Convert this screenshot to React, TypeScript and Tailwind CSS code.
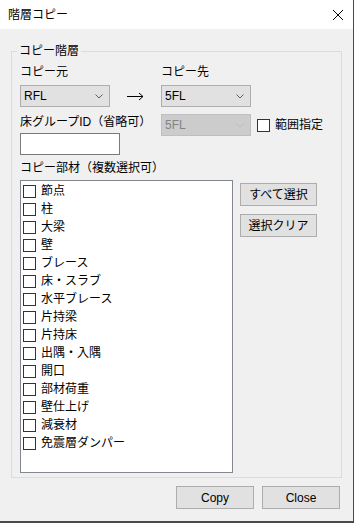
import React from "react";

const parts = [
  "節点",
  "柱",
  "大梁",
  "壁",
  "ブレース",
  "床・スラブ",
  "水平ブレース",
  "片持梁",
  "片持床",
  "出隅・入隅",
  "開口",
  "部材荷重",
  "壁仕上げ",
  "減衰材",
  "免震層ダンパー",
];

function Chevron({ color }: { color: string }) {
  return (
    <svg width="8" height="5" viewBox="0 0 8 5" className="shrink-0">
      <polyline points="0.5,0.5 4,4 7.5,0.5" fill="none" stroke={color} strokeWidth="1" />
    </svg>
  );
}

function Select({ value, disabled }: { value: string; disabled?: boolean }) {
  return (
    <div
      className={`flex h-[22px] w-[90px] items-center justify-between border pl-[3px] pr-[6px] ${
        disabled ? "border-[#bfbfbf] bg-[#cccccc] text-[#838383]" : "border-[#adadad] bg-[#e1e1e1] text-black"
      }`}
    >
      <span>{value}</span>
      <Chevron color={disabled ? "#bdbdbd" : "#606060"} />
    </div>
  );
}

function Box() {
  return <span className="block h-[13px] w-[13px] shrink-0 border border-[#333333] bg-white" />;
}

function Button({ label, w }: { label: string; w: string }) {
  return (
    <button className={`flex h-[23px] ${w} items-center justify-center border border-[#adadad] bg-[#e1e1e1] text-black`}>
      {label}
    </button>
  );
}

export default function App() {
  return (
    <div
      className="h-[523px] w-[354px] overflow-hidden border-r border-b-2 border-[#4a4a4a] bg-[#f0f0f0] text-[12px] leading-[16px] text-black"
      style={{ fontFamily: '"Liberation Sans", "Noto Sans CJK JP", sans-serif' }}
    >
      {/* title bar */}
      <div className="flex h-[29px] items-center justify-between bg-white pl-[8px] pr-[10px]">
        <span>階層コピー</span>
        <svg width="10" height="10" viewBox="0 0 10 10">
          <path d="M0 0 L10 10 M10 0 L0 10" stroke="#000" strokeWidth="1" />
        </svg>
      </div>

      <fieldset className="mx-[11px] mt-[14px] border border-[#dcdcdc] pb-[4px] pl-[5px]">
        <legend className="px-[2px] leading-[16px]">コピー階層</legend>
        <div className="pl-[3px]">
          <div className="mt-[5px] flex h-[16px]">
            <span className="w-[141px]">コピー元</span>
            <span>コピー先</span>
          </div>

          <div className="mt-[5px] flex items-center">
            <Select value="RFL" />
            <div className="flex w-[51px] justify-center">
              <svg width="17" height="9" viewBox="0 0 17 9">
                <path d="M0 4.5 H16 M12 1 L16 4.5 L12 8" fill="none" stroke="#000" strokeWidth="1" />
              </svg>
            </div>
            <Select value="5FL" />
          </div>

          <div className="mt-[7px] flex">
            <div className="flex w-[141px] flex-col">
              <span className="h-[16px]">床グループID（省略可）</span>
              <div className="mt-[3px] h-[22px] w-[100px] border border-[#7a7a7a] bg-white" />
            </div>
            <div className="flex h-[22px] items-center">
              <Select value="5FL" disabled />
              <span className="ml-[6px]">
                <Box />
              </span>
              <span className="ml-[5px]">範囲指定</span>
            </div>
          </div>

          <div className="mt-[5px] h-[16px]">コピー部材（複数選択可）</div>

          <div className="mt-[4px] flex">
            <div className="h-[293px] w-[213px] border border-[#828790] bg-white pl-[2px] pt-[1px]">
              {parts.map((p) => (
                <div key={p} className="flex h-[18px] items-center">
                  <Box />
                  <span className="ml-[5px]">{p}</span>
                </div>
              ))}
            </div>
            <div className="ml-[7px] mt-[3px] flex flex-col gap-[8px]">
              <Button label="すべて選択" w="w-[77px]" />
              <Button label="選択クリア" w="w-[77px]" />
            </div>
          </div>
        </div>
      </fieldset>

      <div className="mt-[8px] flex justify-end gap-[8px] pr-[13px]">
        <Button label="Copy" w="w-[78px]" />
        <Button label="Close" w="w-[78px]" />
      </div>
    </div>
  );
}
